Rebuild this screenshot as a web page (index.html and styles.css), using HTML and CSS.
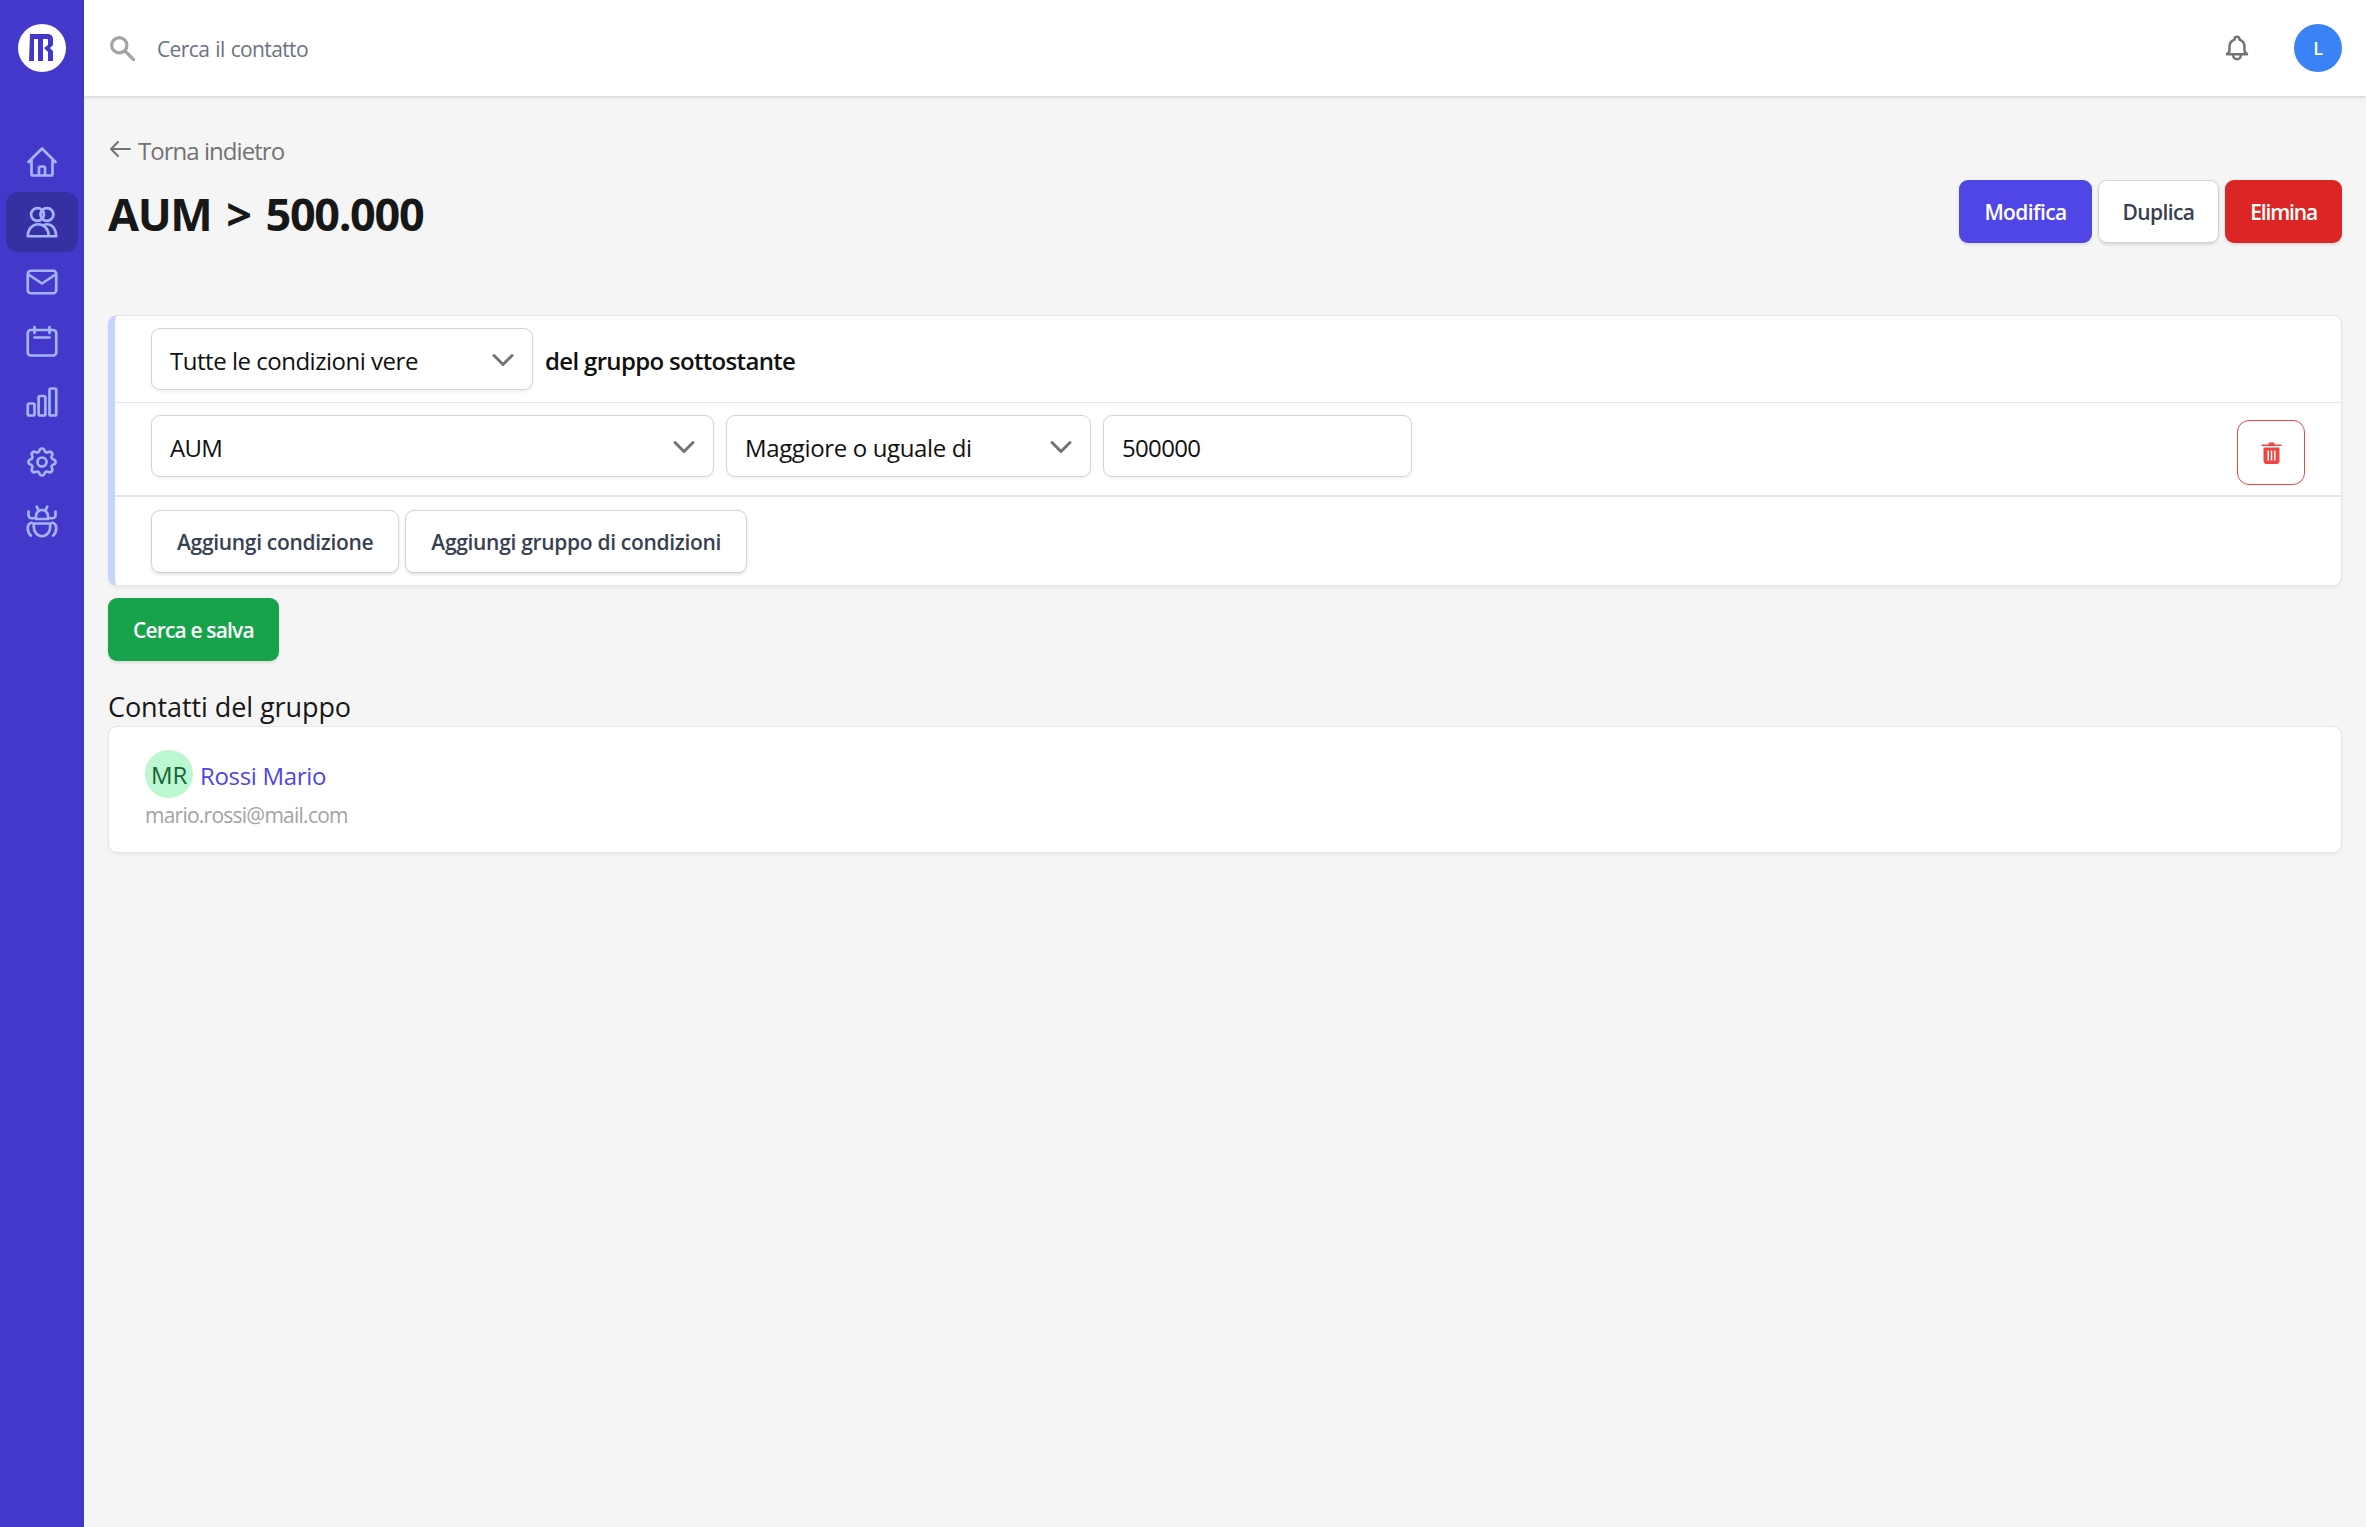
FILE: index.html
```html
<!DOCTYPE html>
<html lang="it">
<head>
<meta charset="utf-8">
<title>AUM &gt; 500.000</title>
<link rel="stylesheet" href="styles.css">
</head>
<body>
<div class="app">
  <aside class="sidebar">
    <div class="logo">
      <svg width="48" height="48" viewBox="0 0 48 48"><circle cx="24" cy="24" r="24" fill="#fff"/><path d="M12 10h18a5 5 0 0 1 5 5v6l-3 3 3 3v10h-5V28l-4-4 4-3v-5a1 1 0 0 0-1-1h-4v22h-5V15h-4v22h-5z" fill="#4338ca"/></svg>
    </div>
    <nav class="nav">
      <a class="nav-item"><svg class="nav-icon" viewBox="0 0 24 24"><path d="M3 12l2-2m0 0l7-7 7 7M5 10v10a1 1 0 0 0 1 1h3m10-11l2 2m-2-2v10a1 1 0 0 1-1 1h-3m-6 0a1 1 0 0 0 1-1v-4a1 1 0 0 1 1-1h2a1 1 0 0 1 1 1v4a1 1 0 0 0 1 1m-6 0h6"/></svg></a>
      <a class="nav-item active"><svg class="nav-icon" viewBox="0 0 24 24"><circle cx="9" cy="7" r="4.300"/><circle cx="15.300" cy="7" r="4.300"/><path d="M2.500 21.500c0-4.500 3-8 7-8s7 3.500 7 8zM13.500 13.900c.7-.3 1.400-.4 2-.4 3.500 0 6 3.500 6 8h-5"/></svg></a>
      <a class="nav-item"><svg class="nav-icon" viewBox="0 0 24 24"><rect x="2.500" y="4.500" width="19" height="15" rx="2"/><path d="M3 7l9 6 9-6"/></svg></a>
      <a class="nav-item"><svg class="nav-icon" viewBox="0 0 24 24"><rect x="2.500" y="4" width="19" height="17" rx="2"/><path d="M7 2v4M17 2v4M7 9h10"/></svg></a>
      <a class="nav-item"><svg class="nav-icon" viewBox="0 0 24 24"><rect x="2.500" y="13" width="4.500" height="8" rx="1"/><rect x="9.750" y="8" width="4.500" height="13" rx="1"/><rect x="17" y="3" width="4.500" height="18" rx="1"/></svg></a>
      <a class="nav-item"><svg class="nav-icon" viewBox="0 0 24 24"><path d="M10.325 4.317c.426-1.756 2.924-1.756 3.350 0a1.724 1.724 0 0 0 2.573 1.066c1.543-.940 3.310.826 2.370 2.370a1.724 1.724 0 0 0 1.065 2.572c1.756.426 1.756 2.924 0 3.350a1.724 1.724 0 0 0-1.066 2.573c.940 1.543-.826 3.310-2.370 2.370a1.724 1.724 0 0 0-2.572 1.065c-.426 1.756-2.924 1.756-3.350 0a1.724 1.724 0 0 0-2.573-1.066c-1.543.940-3.310-.826-2.370-2.370a1.724 1.724 0 0 0-1.065-2.572c-1.756-.426-1.756-2.924 0-3.350a1.724 1.724 0 0 0 1.066-2.573c-.940-1.543.826-3.310 2.370-2.370.996.608 2.296.070 2.572-1.065z"/><circle cx="12" cy="12" r="3"/></svg></a>
      <a class="nav-item"><svg class="nav-icon" viewBox="0 0 24 24"><path d="M8.500 1.800l1.200 2.400M15.500 1.800l-1.200 2.400M8 8a4 4 0 0 1 8 0v2H8zM6.500 13h11v2a5.500 6.500 0 0 1-11 0zM8 9.500H5a2 2 0 0 1-2-2V5M16 9.500h3a2 2 0 0 0 2-2V5M5 12.500c-1.700.5-2.500 2-2.500 3.500 0 2 .6 3.800 2 5M19 12.500c1.700.5 2.500 2 2.500 3.500 0 2-.6 3.800-2 5"/></svg></a>
    </nav>
  </aside>
  <div class="main">
    <header class="topbar">
      <div class="search">
        <svg class="search-icon" viewBox="0 0 24 24"><circle cx="9.500" cy="9.500" r="7"/><path d="M15 15l8 8"/></svg>
        <span class="search-text">Cerca il contatto</span>
      </div>
      <div class="top-right">
        <svg class="bell" viewBox="0 0 24 24"><path d="M15 17h5l-1.400-1.400A2 2 0 0 1 18 14.200V11a6 6 0 0 0-4-5.700V5a2 2 0 1 0-4 0v.3A6 6 0 0 0 6 11v3.200c0 .5-.2 1-.6 1.400L4 17h5m6 0v1a3 3 0 1 1-6 0v-1m6 0H9"/></svg>
        <div class="user">L</div>
      </div>
    </header>
    <main class="content">
      <a class="back">
        <svg class="back-icon" viewBox="0 0 24 24"><path d="M10 5l-7 7 7 7M3 12h19"/></svg>
        <span>Torna indietro</span>
      </a>
      <div class="title-row">
        <h1 class="title">AUM &gt; 500.000</h1>
        <div class="actions">
          <button class="btn btn-primary">Modifica</button>
          <button class="btn btn-white">Duplica</button>
          <button class="btn btn-danger">Elimina</button>
        </div>
      </div>
      <section class="group">
        <div class="row row-first">
          <div class="field select w-all"><span class="all-text">Tutte le condizioni vere</span><svg class="chev" viewBox="0 0 20 20"><path d="M4 7l6 6 6-6"/></svg></div>
          <span class="group-label">del gruppo sottostante</span>
        </div>
        <div class="row row-cond">
          <div class="field select w-attr"><span>AUM</span><svg class="chev" viewBox="0 0 20 20"><path d="M4 7l6 6 6-6"/></svg></div>
          <div class="field select w-op"><span class="op-text">Maggiore o uguale di</span><svg class="chev" viewBox="0 0 20 20"><path d="M4 7l6 6 6-6"/></svg></div>
          <div class="field w-val"><span>500000</span></div>
          <button class="trash-btn"><svg class="trash" viewBox="0 0 21 22"><path d="M7.500 1.500a1 1 0 0 1 1-1h4a1 1 0 0 1 1 1V2.500H20a.75.75 0 0 1 0 1.500H1a.75.75 0 0 1 0-1.500h6.500z"/><path fill-rule="evenodd" d="M2.500 5.500h16V19a3 3 0 0 1-3 3h-10a3 3 0 0 1-3-3zM6.500 8.500v10h1.500v-10zM9.750 8.500v10h1.500v-10zM13 8.500v10h1.500v-10z"/></svg></button>
        </div>
        <div class="row row-add">
          <button class="btn btn-white btn-add">Aggiungi condizione</button>
          <button class="btn btn-white btn-add">Aggiungi gruppo di condizioni</button>
        </div>
      </section>
      <button class="btn btn-success">Cerca e salva</button>
      <h2 class="subtitle">Contatti del gruppo</h2>
      <section class="contacts">
        <div class="contact-line">
          <span class="avatar">MR</span>
          <a class="contact-name">Rossi Mario</a>
        </div>
        <div class="contact-email">mario.rossi@mail.com</div>
      </section>
    </main>
  </div>
</div>
</body>
</html>
```
FILE: styles.css
```css
* { box-sizing: border-box; }
html, body { margin: 0; height: 100%; }
body { font-family: "Open Sans", "Noto Sans", sans-serif; background: #f5f5f5; color: #171717; letter-spacing: -0.02em; }
.app { display: flex; height: 1527px; overflow: hidden; }
.sidebar { width: 84px; flex: none; background: #4338ca; display: flex; flex-direction: column; align-items: center; padding-top: 24px; }
.logo { height: 48px; }
.logo svg { display: block; }
.nav { margin-top: 60px; width: 72px; display: flex; flex-direction: column; }
.nav-item { height: 60px; display: flex; align-items: center; justify-content: center; border-radius: 12px; }
.nav-item.active { background: #3730a3; }
.nav-icon { width: 36px; height: 36px; fill: none; stroke: #a5b4fc; stroke-width: 1.800; stroke-linecap: round; stroke-linejoin: round; }
.main { flex: 1; min-width: 0; display: flex; flex-direction: column; }
.topbar { height: 96px; flex: none; background: #fff; box-shadow: 0 1.500px 3px rgba(0,0,0,.14); display: flex; align-items: center; justify-content: space-between; padding: 0 24px 0 25px; position: relative; }
.search { display: flex; align-items: center; gap: 22px; }
.search-icon { width: 26px; height: 26px; fill: none; stroke: #a3a3a3; stroke-width: 3; stroke-linecap: round; }
.search-text { font-size: 21px; color: #6b7280; letter-spacing: -0.03em; word-spacing: 0.06em; padding-top: 2px; }
.top-right { display: flex; align-items: center; gap: 42px; }
.bell { width: 30px; height: 30px; fill: none; stroke: #737373; stroke-width: 2; stroke-linecap: round; stroke-linejoin: round; }
.user { width: 48px; height: 48px; border-radius: 50%; background: #3b82f6; color: #fff; font-size: 18px; font-weight: 600; display: flex; align-items: center; justify-content: center; }
.content { padding: 36px 24px 0; flex: 1; }
.back { display: flex; align-items: center; gap: 6px; height: 36px; color: #737373; font-size: 24px; letter-spacing: -0.04em; }
.back-icon { width: 24px; height: 24px; fill: none; stroke: #737373; stroke-width: 2; stroke-linecap: round; stroke-linejoin: round; margin-top: -3px; }
.title-row { display: flex; align-items: flex-start; justify-content: space-between; margin-top: 14px; height: 133px; }
.title { margin: 0; font-size: 45px; font-weight: 700; line-height: 63px; color: #171717; letter-spacing: -0.03em; word-spacing: 0.1em; }
.actions { display: flex; gap: 6px; margin-top: -2px; }
.btn { height: 63px; padding: 0 24px; border-radius: 9px; border: 1.500px solid transparent; font: inherit; letter-spacing: inherit; font-size: 21px; font-weight: 600; cursor: pointer; box-shadow: 0 1.500px 3px rgba(0,0,0,.1); }
.btn-primary { background: #4f46e5; color: #fff; letter-spacing: -0.03em; }
.btn-white { background: #fff; color: #374151; border-color: #d1d5db; letter-spacing: -0.03em; }
.btn-add { letter-spacing: -0.015em; padding: 2px 25px 0; }
.btn-danger { background: #dc2626; color: #fff; letter-spacing: -0.055em; }
.btn-success { display: block; background: #16a34a; color: #fff; margin-top: 12px; letter-spacing: -0.04em; }
.group { background: #fff; border: 1.500px solid #e5e5e5; border-left: 7px solid #c7d2fe; border-radius: 9px; box-shadow: 0 1.500px 3px rgba(0,0,0,.05); }
.row { display: flex; align-items: center; padding: 0 36px; }
.row-first { height: 87px; border-bottom: 1.500px solid #e5e5e5; }
.row-cond { height: 94px; border-bottom: 2px solid #e5e5e5; gap: 12px; align-items: flex-start; padding-top: 12px; }
.row-add { height: 88px; gap: 6px; }
.field { height: 62px; display: flex; align-items: center; padding: 3px 14px 0 18px; background: #fff; border: 1.500px solid #d1d5db; border-radius: 9px; font-size: 24px; color: #111; box-shadow: 0 1.500px 3px rgba(0,0,0,.06); letter-spacing: -0.028em; }
.select { justify-content: space-between; }
.all-text { letter-spacing: -0.02em; }
.op-text { letter-spacing: -0.015em; }
.chev { width: 30px; height: 30px; fill: none; stroke: #737373; stroke-width: 2; stroke-linecap: round; stroke-linejoin: round; flex: none; margin-top: -2px; }
.w-all { width: 382px; }
.w-attr { width: 563px; }
.w-op { width: 365px; }
.w-val { width: 309px; }
.group-label { margin-left: 12px; font-size: 24px; font-weight: 600; color: #111; letter-spacing: -0.028em; padding-top: 2px; }
.trash-btn { margin-left: auto; margin-top: 5px; width: 68px; height: 65px; background: #fff; border: 1.500px solid #ef4444; border-radius: 12px; display: flex; align-items: center; justify-content: center; padding: 0; }
.trash { width: 21px; height: 22px; fill: #ef4444; }
.subtitle { margin: 28px 0 0; font-size: 27px; font-weight: 500; line-height: 36px; color: #171717; letter-spacing: -0.003em; }
.contacts { margin-top: 1px; height: 127px; background: #fff; border: 1.500px solid #e5e5e5; border-radius: 9px; padding: 23px 36px 0; box-shadow: 0 1.500px 3px rgba(0,0,0,.04); }
.contact-line { display: flex; align-items: center; gap: 7px; }
.avatar { width: 48px; height: 48px; border-radius: 50%; background: #bbf7d0; color: #166534; font-size: 24px; display: flex; align-items: center; justify-content: center; flex: none; }
.contact-name { color: #4f46e5; font-size: 24px; padding-top: 2px; }
.contact-email { margin-top: 2px; color: #a3a3a3; font-size: 21px; line-height: 30px; letter-spacing: -0.036em; }
```
